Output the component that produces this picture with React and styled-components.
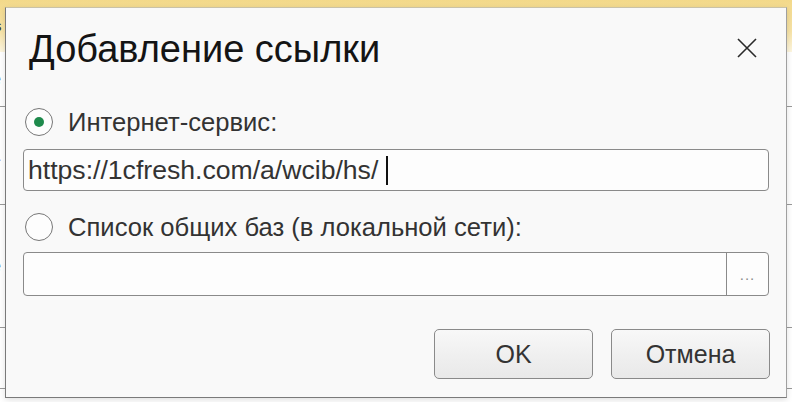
import React from "react";
import styled, { createGlobalStyle } from "styled-components";

const Global = createGlobalStyle`
  html, body {
    margin: 0;
    padding: 0;
    background: #ffffff;
  }
  body {
    font-family: "Liberation Sans", Arial, sans-serif;
  }
`;

// Page behind the dialog
const Page = styled.div`
  position: relative;
  width: 792px;
  height: 402px;
  overflow: hidden;
  background: #ffffff;
`;

const TopBand = styled.div`
  height: 52px;
  background: linear-gradient(to bottom, #f3d98a 0%, #f7e3a6 60%, #fdf6df 100%);
  font-size: 15px;
  color: #333;
  line-height: 52px;
  margin-left: -6px;
`;

const BackRow = styled.div`
  height: ${p => p.h}px;
  border-bottom: 1px solid #9a9a9a;
  font-size: 18px;
  line-height: ${p => p.h}px;
  color: ${p => p.color || "#333"};
  margin-left: -9px;
`;

// Dialog window
const Dialog = styled.div`
  position: absolute;
  left: 5px;
  top: 7px;
  width: 782px;
  height: 391px;
  box-sizing: border-box;
  background: #f9f9f9;
  border: 1px solid #7a7a7a;
  border-top-color: #c9c2a8;
  border-right-color: #a0a0a0;
  box-shadow: 0 2px 6px rgba(0, 0, 0, 0.12);
  display: flex;
  flex-direction: column;
`;

const Header = styled.div`
  display: flex;
  align-items: flex-start;
  justify-content: space-between;
  padding: 19px 29px 0 23px;
`;

const Title = styled.h1`
  margin: 0;
  font-size: 38px;
  line-height: 45px;
  font-weight: normal;
  color: #141414;
`;

const CloseButton = styled.div`
  width: 20px;
  height: 20px;
  margin-top: 11px;
  display: flex;
`;

const Body = styled.div`
  display: flex;
  flex-direction: column;
  padding: 35px 17px 0 17px;
`;

const RadioRow = styled.label`
  display: flex;
  align-items: center;
  gap: 15px;
  height: 30px;
  padding-left: 2px;
  margin-top: ${p => p.mt || 0}px;
`;

const Radio = styled.span`
  width: 28px;
  height: 28px;
  box-sizing: border-box;
  border-radius: 50%;
  border: 1px solid #777;
  background: #fdfdfd;
  display: flex;
  align-items: center;
  justify-content: center;

  &::after {
    content: "";
    width: 10px;
    height: 10px;
    border-radius: 50%;
    background: ${p => (p.checked ? "#1e8a4c" : "transparent")};
  }
`;

const Label = styled.span`
  font-size: 25.6px;
  line-height: 30px;
  color: #333;
`;

const Field = styled.div`
  display: flex;
  align-items: center;
  height: ${p => p.h}px;
  box-sizing: border-box;
  margin-top: ${p => p.mt}px;
  border: 1px solid #8a8a8a;
  border-radius: 4px;
  background: #fdfdfd;
  overflow: hidden;
`;

const FieldText = styled.span`
  flex: 1;
  display: flex;
  align-items: center;
  padding-left: 4px;
  font-size: 26.6px;
  color: #333;
  white-space: nowrap;
`;

const Caret = styled.span`
  display: inline-block;
  width: 2px;
  height: 29px;
  margin-left: 8px;
  background: #111;
`;

const ChoiceButton = styled.span`
  width: 41px;
  align-self: stretch;
  border-left: 1px solid #8a8a8a;
  display: flex;
  align-items: center;
  justify-content: center;
  font-size: 15px;
  letter-spacing: 1px;
  color: #8a8a8a;
`;

const Footer = styled.div`
  display: flex;
  justify-content: flex-end;
  gap: 18px;
  padding: 33px 16px 0 0;
`;

const Button = styled.button`
  width: 159px;
  height: 50px;
  box-sizing: border-box;
  border: 1px solid #8a8a8a;
  border-radius: 5px;
  background: linear-gradient(to bottom, #f8f8f8 0%, #efefef 55%, #e9e9e9 100%);
  font-family: "Liberation Sans", Arial, sans-serif;
  font-size: 25px;
  color: #333;
  padding: 0;
`;

const CloseIcon = () => (
  <svg width="20" height="20" viewBox="0 0 20 20">
    <path d="M1 1 L19 19 M19 1 L1 19" stroke="#2a2a2a" strokeWidth="1.6" fill="none" />
  </svg>
);

const App = () => {
  return (
    <Page>
      <Global />
      <TopBand>s</TopBand>
      <BackRow h={54}>е</BackRow>
      <BackRow h={97} color="#7a1010">1</BackRow>
      <BackRow h={122}>е</BackRow>
      <BackRow h={60} color="#2a5aa0">y</BackRow>

      <Dialog>
        <Header>
          <Title>Добавление ссылки</Title>
          <CloseButton>
            <CloseIcon />
          </CloseButton>
        </Header>
        <Body>
          <RadioRow>
            <Radio checked />
            <Label>Интернет-сервис:</Label>
          </RadioRow>
          <Field h={42} mt={12}>
            <FieldText>
              https://1cfresh.com/a/wcib/hs/
              <Caret />
            </FieldText>
          </Field>
          <RadioRow mt={21}>
            <Radio />
            <Label>Список общих баз (в локальной сети):</Label>
          </RadioRow>
          <Field h={44} mt={10}>
            <FieldText />
            <ChoiceButton>...</ChoiceButton>
          </Field>
        </Body>
        <Footer>
          <Button>OK</Button>
          <Button>Отмена</Button>
        </Footer>
      </Dialog>
    </Page>
  );
};

export default App;
